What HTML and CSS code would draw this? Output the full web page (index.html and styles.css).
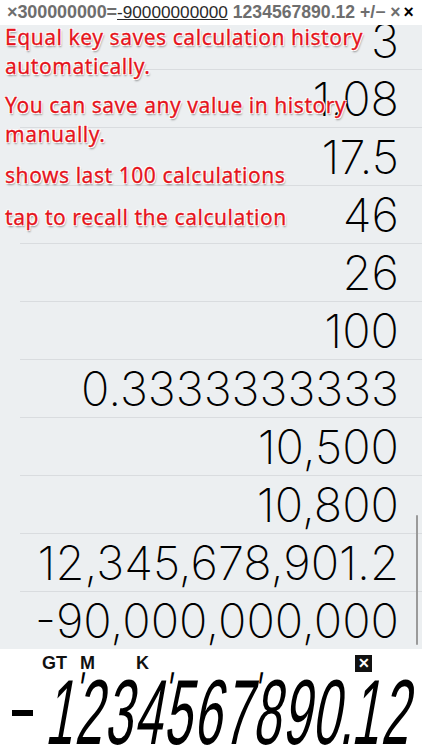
FILE: index.html
```html
<!DOCTYPE html>
<html>
<head>
<meta charset="utf-8">
<link rel="stylesheet" href="styles.css">
</head>
<body>
<div class="app">
  <header class="topbar">
    <span class="op a">×300000000=</span><span class="res">-90000000000</span><span class="op c"> 1234567890.12 +/− ×</span><span class="cur">×</span>
  </header>
  <main class="history">
    <div class="list">
      <div class="row">3</div>
      <div class="row">1.08</div>
      <div class="row">17.5</div>
      <div class="row">46</div>
      <div class="row">26</div>
      <div class="row">100</div>
      <div class="row">0.3333333333</div>
      <div class="row">10,500</div>
      <div class="row">10,800</div>
      <div class="row">12,345,678,901.2</div>
      <div class="row">-90,000,000,000</div>
    </div>
    <div class="notes">
      <p class="n1">Equal key saves calculation history<br>automatically.</p>
      <p class="n2">You can save any value in history<br>manually.</p>
      <p class="n3">shows last 100 calculations</p>
      <p class="n4">tap to recall the calculation</p>
    </div>
    <div class="scrollbar"></div>
  </main>
  <footer class="display">
    <div class="flags">
      <span class="gt">GT</span><span class="m">M</span><span class="k">K</span><span class="box">✕</span>
    </div>
    <div class="lcd">
      <span class="sign" role="img" aria-label="minus"></span>
      <span class="digits">1<span class="sep">'</span>234<span class="sep">'</span>567<span class="sep">'</span>890<span class="dot">.</span>12</span>
    </div>
  </footer>
</div>
</body>
</html>
```

FILE: styles.css
```css
* { box-sizing: border-box; }
html, body { margin: 0; padding: 0; }
body { width: 422px; height: 750px; overflow: hidden; background: #fff; }
.app { width: 422px; height: 750px; display: flex; flex-direction: column; overflow: hidden; }

.topbar {
  height: 25px;
  flex: none;
  background: #fff;
  font-family: "Liberation Sans", Arial, sans-serif;
  line-height: 25px;
  white-space: nowrap;
  padding-left: 7px;
  position: relative;
  z-index: 2;
  overflow: hidden;
}
.topbar .op { color: #6e6e6e; font-weight: bold; }
.topbar .a { font-size: 18px; letter-spacing: -0.1px; }
.topbar .c { font-size: 17.6px; }
.topbar .res { color: #2a2a2a; font-weight: normal; font-size: 17.2px; text-decoration: underline; }
.topbar .cur { color: #000; font-weight: bold; font-size: 17.5px; margin-left: 3px; }

.history {
  flex: 1;
  position: relative;
  background: #eceff1;
  overflow: hidden;
}
.list { margin-top: -13px; }
.row {
  height: 58px;
  margin-left: 20px;
  border-bottom: 1px solid #d9dcdf;
  text-align: right;
  padding-right: 23px;
  font-family: "Inter", "Roboto", sans-serif;
  font-weight: 170;
  font-size: 47px;
  line-height: 58px;
  color: #000;
}

.notes {
  position: absolute;
  left: 5px;
  top: -2px;
  font-family: "Noto Sans", "Open Sans", sans-serif;
  font-size: 21px;
  letter-spacing: 0.55px;
  line-height: 29px;
  color: #e5141c;
  -webkit-text-stroke: 0.3px #e5141c;
  text-shadow: -1px -1px 0 #fff, 1px -1px 0 #fff, -1px 1px 0 #fff, 1px 1px 0 #fff, 0 0 2px #fff, 1px 2px 2px rgba(0,0,0,0.45);
}
.notes p { margin: 0; }
.notes .n2 { margin-top: 10px; }
.notes .n3 { margin-top: 12px; }
.notes .n4 { margin-top: 13px; }

.scrollbar {
  position: absolute;
  right: 4px;
  top: 490px;
  width: 2px;
  height: 130px;
  background: #9a9a9a;
  border-radius: 1px;
}

.display {
  height: 101px;
  flex: none;
  background: #fff;
  position: relative;
  overflow: hidden;
}
.flags {
  display: flex;
  align-items: center;
  height: 26px;
  padding-top: 3px;
  font-family: "Liberation Sans", Arial, sans-serif;
  font-weight: bold;
  font-size: 18px;
  color: #111;
}
.flags span { flex: none; }
.flags .gt { margin-left: 42px; }
.flags .m { margin-left: 13px; }
.flags .k { margin-left: 41px; }
.flags .box {
  margin-left: 206px;
  width: 17px; height: 17px;
  background: #111; color: #fff;
  font-size: 14px; line-height: 17px; text-align: center;
}
.lcd {
  display: flex;
  align-items: center;
  height: 75px;
  font-family: "Liberation Sans", Arial, sans-serif;
  color: #000;
}
.lcd .sign {
  flex: none;
  width: 21px; height: 6px; background: #000;
  margin-left: 12px;
}
.lcd .digits {
  flex: none;
  margin-left: 17px;
  font-size: 57px;
  letter-spacing: 2px;
  line-height: 1;
  display: inline-block;
  white-space: nowrap;
  transform: skewX(-10deg) scale(0.88, 1.62);
  transform-origin: left center;
}
.lcd .sep { display: inline-block; width: 0; font-size: 32px; vertical-align: top; position: relative; left: -6px; top: -1px; }
.lcd .dot { display: inline-block; width: 11px; letter-spacing: 0; position: relative; left: -3px; }
```
